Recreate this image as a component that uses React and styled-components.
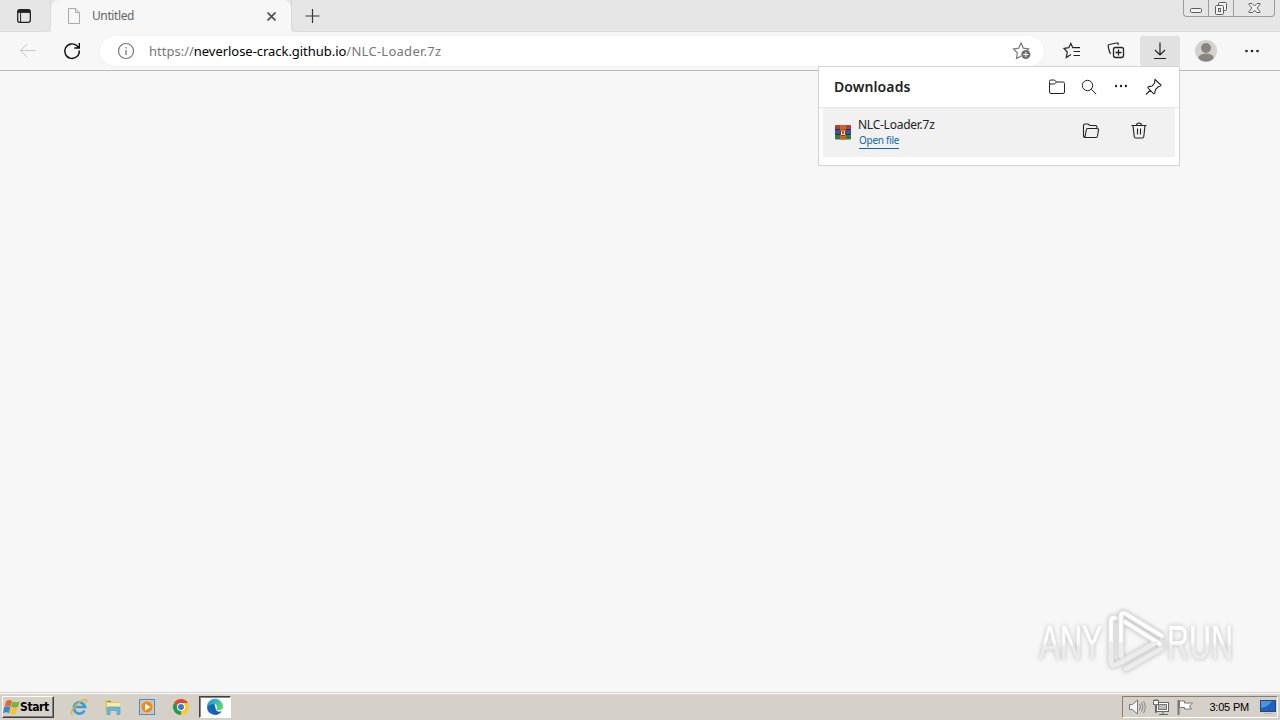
import React from 'react';
import styled, { createGlobalStyle } from 'styled-components';

function App() {
    return (
        <Desktop>
            <GlobalStyle />
            <TabStrip>
                <TabActions>
                    <Icon $size={16} viewBox="0 0 16 16">
                        <rect x="1.7" y="1.7" width="12.6" height="12.6" rx="2" strokeWidth="1.3" />
                        <path d="M2 3.4h12" strokeWidth="3" />
                        <path d="M4.6 5v9" />
                    </Icon>
                </TabActions>
                <Tab>
                    <Icon $size={16} $color="#a8a8a8" viewBox="0 0 16 16">
                        <path d="M2.5.5h7l4 4v11h-11zM9.5.5v4h4" />
                    </Icon>
                    <TabTitle>Untitled</TabTitle>
                    <Icon $size={16} $color="#444" viewBox="0 0 16 16">
                        <path d="M4.500 4.500l8 8M12.500 4.500l-8 8" strokeWidth="1.7" />
                    </Icon>
                </Tab>
                <NewTab>
                    <Icon $size={16} $color="#333" viewBox="0 0 16 16">
                        <path d="M8.5 1v14M1.5 8h14" strokeWidth="1.2" />
                    </Icon>
                </NewTab>
                <WindowButtons>
                    <WindowButton $width={25}>
                        <Icon $size={14} $color="#5c5c5c" viewBox="0 0 14 14">
                            <rect x="1.5" y="7.5" width="11" height="4" rx="1" fill="#f4f4f4" />
                        </Icon>
                    </WindowButton>
                    <WindowButton $width={25}>
                        <Icon $size={14} $color="#5c5c5c" viewBox="0 0 14 14">
                            <rect x="4.5" y="1.5" width="8" height="8" rx="1" fill="#f4f4f4" />
                            <rect x="1.5" y="4.5" width="8" height="9" rx="1" fill="#f4f4f4" />
                            <rect x="4.5" y="7.5" width="2" height="3" />
                        </Icon>
                    </WindowButton>
                    <WindowButton $width={41}>
                        <Icon $size={14} $color="#5c5c5c" viewBox="0 0 14 14">
                            <path d="M2 2.500h3l2.500 2.500 2.500-2.500h3v1L10 7l3 3.500v1h-3L7.500 9.500 5 11.500H2v-1L5 7 2 3.500z" fill="#f4f4f4" />
                        </Icon>
                    </WindowButton>
                </WindowButtons>
            </TabStrip>
            <Toolbar>
                <ToolButton>
                    <Icon $size={20} $color="#c8c8c8" viewBox="0 0 20 20">
                        <path d="M17.500 9.500H2.500M9 3L2.500 9.500 9 16" />
                    </Icon>
                </ToolButton>
                <ToolButton>
                    <Icon $size={20} $color="#111" viewBox="0 0 20 20">
                        <path d="M17.300 9.500A7.300 7.300 0 1 1 15 4.800L17 7M17.300 2v5h-5" strokeWidth="1.4" />
                    </Icon>
                </ToolButton>
                <AddressBar>
                    <Icon $size={18} $color="#777" viewBox="0 0 18 18">
                        <circle cx="9" cy="9" r="7.500" strokeWidth="1.2" />
                        <path d="M9 8v5M9 5v1.400" strokeWidth="1.3" />
                    </Icon>
                    <Url><span>https://</span><b>neverlose-crack.github.io</b>/NLC-Loader.7z</Url>
                    <Icon $size={20} $color="#777" viewBox="0 0 20 20">
                        <path d="M9 15l-4.500 2.500.8-5.700L1.500 8l5.200-.8L9 2l2.400 5.200 5.200.8-2 2" strokeWidth="1.2" />
                        <circle cx="13.800" cy="13.500" r="4.600" fill="#707070" stroke="none" />
                        <path d="M13.800 11v5M11.300 13.500h5" stroke="#fff" />
                    </Icon>
                </AddressBar>
                <ToolButton>
                    <Icon $size={20} viewBox="0 0 20 20">
                        <path d="M9 13.600L4.300 16.500l1-5.500L2 7.500l4.800-.8L8.800 2.500l2 4.200H18M11.500 10.500H18M11.500 14.500H18" strokeWidth="1.2" />
                    </Icon>
                </ToolButton>
                <ToolButton>
                    <Icon $size={20} viewBox="0 0 20 20">
                        <path d="M5 12.500l-1.200-.7-1.600-6.300q-.3-1.500 1-2L10.500 2q1.300-.3 1.700 1l.3 1" strokeWidth="1.200" />
                        <rect x="7.500" y="6.500" width="10" height="10" rx="2" strokeWidth="1.300" />
                        <path d="M12.500 8.500v6M9.500 11.500h6" strokeWidth="1.300" />
                    </Icon>
                </ToolButton>
                <ToolButton $active>
                    <Icon $size={20} viewBox="0 0 20 20">
                        <path d="M10 1.500v12M5 9l5 5 5-5M4 17.500h12" strokeWidth="1.2" />
                    </Icon>
                </ToolButton>
                <Profile>
                    <svg width="22" height="22" viewBox="0 0 22 22">
                        <circle cx="11" cy="11" r="11" fill="#d5d2ce" />
                        <circle cx="11" cy="8" r="5" fill="#888480" />
                        <ellipse cx="11" cy="17.500" rx="7.500" ry="4" fill="#888480" />
                    </svg>
                </Profile>
                <ToolButton>
                    <Dots size={20} />
                </ToolButton>
                <DownloadsPanel>
                    <PanelHeader>
                        <PanelTitle>Downloads</PanelTitle>
                        <PanelAction>
                            <Icon $size={18} viewBox="0 0 18 18">
                                <path d="M1.500 3.500q0-1.500 1.500-1.500h3.500L8.500 4H15q1.500 0 1.500 1.500v8.500q0 1.500-1.500 1.500H3q-1.500 0-1.500-1.500zM1.500 6h5l2-2" />
                            </Icon>
                        </PanelAction>
                        <PanelAction>
                            <Icon $size={18} viewBox="0 0 18 18">
                                <circle cx="7.500" cy="7.500" r="5.200" />
                                <path d="M11.200 11.200l5 5" />
                            </Icon>
                        </PanelAction>
                        <PanelAction $lift={2}>
                            <Dots size={18} />
                        </PanelAction>
                        <PanelAction>
                            <Icon $size={18} viewBox="0 0 18 18">
                                <path d="M11 1.500l6 5.500-1 1.200-1.500.3-3 3-.7 3.500-1 .8-6-6 .8-1.200 3.500-.6 2.500-3 .2-2.500zM6.500 12L2 16.500" strokeWidth="1.100" />
                            </Icon>
                        </PanelAction>
                    </PanelHeader>
                    <DownloadRow>
                        <ArchiveIcon />
                        <FileInfo>
                            <FileName>NLC-Loader.7z</FileName>
                            <OpenLink>Open file</OpenLink>
                        </FileInfo>
                        <RowAction>
                            <Icon $size={18} viewBox="0 0 18 18">
                                <path d="M3.500 15.500q-2 0-2-2v-10Q1.500 2 3 2h3l2 1.500h5.500q1.500 0 1.500 1.500v1.500M3 15L4.300 8q.2-1.500 1.300-1.500H15q1.800 0 1.500 1.500L15.500 14q-.3 1.500-1.300 1.500H3.500" strokeWidth="1.1" />
                            </Icon>
                        </RowAction>
                        <RowAction>
                            <Icon $size={18} viewBox="0 0 18 18">
                                <path d="M1.500 3.500h15M6.500 3.500Q6.500 1 9 1t2.500 2.500M3 3.500l1.200 11q.2 1.500 1.500 1.500h6.600q1.300 0 1.500-1.500L15 3.500M7.500 6.500v6M10.500 6.500v6" strokeWidth="1.1" />
                            </Icon>
                        </RowAction>
                    </DownloadRow>
                </DownloadsPanel>
            </Toolbar>
            <Page>
                <Watermark />
            </Page>
            <Taskbar>
                <StartButton>
                    <svg width="17" height="17" viewBox="0 0 16 16">
                        <path d="M3 2q3-2 5.500 0L7.200 7.300Q4 5.500 1.500 7z" fill="#e36a2b" />
                        <path d="M9 2.300q3 1.500 6.700 0l-1.500 5.300q-3 1.500-6.500 0z" fill="#79b63c" />
                        <path d="M1.200 7.600q3-1.500 5.700.2L5.500 13.500q-2.500-2-5.500 0z" fill="#3d84cc" />
                        <path d="M7.500 8.200q3 1.500 6.300 0l-1.500 5.500q-3 1.500-6.200 0z" fill="#f4c530" />
                    </svg>
                    Start
                </StartButton>
                <QuickLaunch>
                    <TaskItem><ExplorerLogo /></TaskItem>
                    <TaskItem><FoldersLogo /></TaskItem>
                    <TaskItem><PlayerLogo /></TaskItem>
                    <TaskItem><ChromeLogo /></TaskItem>
                    <TaskItem $active><EdgeLogo /></TaskItem>
                </QuickLaunch>
                <Tray>
                    <Icon $size={18} $color="#777" viewBox="0 0 18 18">
                        <path d="M1.500 6.500h3L9.500 2v14l-5-4.500h-3z" fill="#f8f8f8" />
                        <path d="M11.500 6q2 3 0 6M13.500 4.500q3 4.500 0 9M15.500 3q3.500 6 0 12" stroke="#888" />
                    </Icon>
                    <Icon $size={18} $color="#666" viewBox="0 0 18 18">
                        <rect x="4.500" y="4.500" width="12" height="9" fill="#fff" />
                        <rect x="6.500" y="6.500" width="8" height="5" fill="#bbb" stroke="#777" />
                        <path d="M11 14v2M7 16.500h9" />
                        <path d="M1.500 2.500h5v4h-2v8h-1v-8h-2zM3 1v2M5 1v2" fill="#fff" />
                    </Icon>
                    <Icon $size={18} $color="#777" viewBox="0 0 18 18">
                        <path d="M2.500 2v15" strokeWidth="2" />
                        <path d="M3.500 3h5v2h8l-3 3 2 3h-7V9.500h-5z" fill="#fff" />
                    </Icon>
                    <Clock>3:05 PM</Clock>
                    <svg width="16" height="14" viewBox="0 0 16 14">
                        <rect x=".5" y=".5" width="15" height="11" fill="#1e62bd" stroke="#244878" />
                        <path d="M1 8Q8 7 12 1H1z" fill="#4b94e2" />
                        <path d="M4 13.500h8" stroke="#b5b5b5" />
                    </svg>
                </Tray>
            </Taskbar>
        </Desktop>
    );
}

function Dots({ size }) {
    return (
        <svg width={size} height={size} viewBox="0 0 20 20" fill="#222">
            <circle cx="4.500" cy="10" r="1.300" />
            <circle cx="10" cy="10" r="1.300" />
            <circle cx="15.500" cy="10" r="1.300" />
        </svg>
    );
}

function ArchiveIcon() {
    return (
        <svg width="16" height="16" viewBox="0 0 16 16">
            <rect y="1" width="16" height="5" rx="1" fill="#b83d36" />
            <rect y="6" width="16" height="5" fill="#3453ab" />
            <rect y="11" width="16" height="4.500" rx="1" fill="#2f7f3c" />
            <path d="M0 5.500h16M0 10.500h16" stroke="#4b2637" />
            <rect x="5" y="1" width="6" height="14.500" fill="#c8652a" />
            <rect x="5.500" y="6" width="5" height="5.500" rx="1" fill="#f3d9a0" stroke="#7c3a18" />
            <path d="M8 7v3" stroke="#a33a1c" strokeWidth="1.500" />
        </svg>
    );
}

function ExplorerLogo() {
    return (
        <svg width="18" height="18" viewBox="0 0 18 18" fill="none">
            <path d="M14.500 12.500A5.600 5.600 0 1 1 15 9H4.500" stroke="#37a0dc" strokeWidth="2.700" />
            <path d="M5 8Q6.500 5 9.500 5.200" stroke="#a5dcf7" />
            <path d="M2.500 16.500C-1 15 5 7 10.500 3.500q5-3 6-1.500.5 1-.8 3" stroke="#e7b431" strokeWidth="1.400" />
        </svg>
    );
}

function FoldersLogo() {
    return (
        <svg width="18" height="18" viewBox="0 0 18 18">
            <path d="M1 3l1-1h5l1 2h8v9H1z" fill="#e6c565" />
            <path d="M3 5h13v8H3z" fill="#f8e9a6" />
            <path d="M3 16.500V10q0-1 1-1h11q1 0 1 1v6.500h-3v-4H6v4z" fill="#68b8de" stroke="#4b93b8" strokeWidth=".6" />
            <path d="M3 3.500h4" stroke="#57a95c" />
        </svg>
    );
}

function PlayerLogo() {
    return (
        <svg width="18" height="18" viewBox="0 0 18 18">
            <rect x="1.500" y="1.500" width="15" height="15" fill="#a9cdee" stroke="#4f8ac2" />
            <circle cx="9" cy="9" r="6.200" fill="#f18a1d" stroke="#fbd090" />
            <path d="M7 5.500v7l5.500-3.500z" fill="#fff" />
        </svg>
    );
}

function ChromeLogo() {
    return (
        <svg width="18" height="18" viewBox="0 0 18 18">
            <path d="M9 9L2.070 5A8 8 0 0 1 15.930 5z" fill="#df4735" />
            <path d="M9 9l6.930-4A8 8 0 0 1 9 17z" fill="#fac72d" />
            <path d="M9 9v8A8 8 0 0 1 2.070 5z" fill="#27994e" />
            <path d="M9 5h7l-3.500 6z" fill="#fac72d" />
            <circle cx="9" cy="9" r="4" fill="#fff" />
            <circle cx="9" cy="9" r="3" fill="#4077ce" />
        </svg>
    );
}

function EdgeLogo() {
    return (
        <svg width="18" height="18" viewBox="0 0 18 18">
            <defs>
                <linearGradient id="edgeTop" x1="0" y1="0" x2="1" y2=".4">
                    <stop stopColor="#258bd1" />
                    <stop offset=".6" stopColor="#2fbac8" />
                    <stop offset="1" stopColor="#62d260" />
                </linearGradient>
            </defs>
            <path d="M1 9a8 8 0 0 0 14.500 4.500q-6 1-6-4L8 5 2 7z" fill="#1769b7" />
            <path d="M1 9a8 8 0 0 1 16-.5c.2 3-2.200 4-5 3.700-1.700-.2-2-1-1-2C11.500 7 9 5.500 6 6.200 3 6.800 1.500 8 1 9z" fill="url(#edgeTop)" />
            <path d="M6.500 8q-2 6 4 8.500 3.500-.8 5-3-6 1.500-7.500-2.500-.6-1.500.5-3.500z" fill="#1560a8" />
        </svg>
    );
}

function Watermark() {
    return (
        <WatermarkArt viewBox="0 0 200 72">
            <defs>
                <linearGradient id="fade" x1="0" y1="0" x2="0" y2="1">
                    <stop offset=".5" stopColor="#fff" />
                    <stop offset=".6" stopColor="#ebebeb" />
                    <stop offset="1" stopColor="#ededed" />
                </linearGradient>
            </defs>
            <text x="4.500" y="53.500" textLength="63" lengthAdjust="spacingAndGlyphs">ANY</text>
            <text x="132" y="53.500" textLength="66" lengthAdjust="spacingAndGlyphs">RUN</text>
            <g fill="none" stroke="#e2e2e2" strokeWidth="6" strokeLinejoin="round" strokeLinecap="round">
                <path d="M80 13q-4-1-4 3v41q0 5 5 3l40-23" />
                <path d="M86 51V11q0-5 5-2l36 22M90 17l35 22" />
                <path d="M91 64l35-20q4-4 0-7" />
            </g>
            <path d="M80 13q-4-1-4 3v22M86 39V11q0-5 5-2l36 22M90 17l35 22" fill="none" stroke="#fff" strokeWidth="3.500" strokeLinecap="round" />
            <path d="M76 38v19q0 5 5 3l40-22M86 39v12M91 64l35-20" fill="none" stroke="#ececec" strokeWidth="4" strokeLinecap="round" />
        </WatermarkArt>
    );
}

const GlobalStyle = createGlobalStyle`
    * {
        box-sizing: border-box;
    }
    body {
        margin: 0;
        overflow: hidden;
        font-family: "Noto Sans", "Open Sans", sans-serif;
    }
    svg {
        display: block;
        flex: none;
    }
`;

const Desktop = styled.div`
    display: flex;
    flex-direction: column;
    width: 1280px;
    height: 720px;
    background: #f7f7f7;
`;

const Icon = styled.svg`
    width: ${(props) => props.$size}px;
    height: ${(props) => props.$size}px;
    fill: none;
    stroke: ${(props) => props.$color || '#222'};
`;

const TabStrip = styled.div`
    display: flex;
    height: 32px;
    background: #e6e6e6;
`;

const TabActions = styled.div`
    display: flex;
    align-items: center;
    width: 51px;
    height: 32px;
    padding-left: 16px;
    border-bottom: 1px solid #dcdcdc;
    border-right: 1px solid #dadada;
    border-radius: 0 0 8px 0;
`;

const Tab = styled.div`
    display: flex;
    align-items: center;
    width: 240px;
    padding: 0 12px 0 15px;
    background: #f7f7f7;
    border-radius: 8px 8px 0 0;
`;

const TabTitle = styled.span`
    flex: 1;
    margin-left: 10px;
    font-size: 12px;
    line-height: 16px;
    letter-spacing: -0.4px;
    color: #666;
`;

const NewTab = styled.div`
    display: flex;
    flex: 1;
    align-items: center;
    padding-left: 12px;
    border-bottom: 1px solid #dcdcdc;
    border-left: 1px solid #d4d4d4;
    border-radius: 0 0 0 8px;
`;

const WindowButtons = styled.div`
    display: flex;
    width: 97px;
    height: 32px;
    padding-right: 4px;
    border-bottom: 1px solid #dcdcdc;
`;

const WindowButton = styled.div`
    display: flex;
    align-items: center;
    justify-content: center;
    width: ${(props) => props.$width + 1}px;
    height: 17px;
    margin-right: -1px;
    border: 1px solid #9b9b9b;
    border-top: none;
    &:first-child {
        border-bottom-left-radius: 4px;
    }
    &:last-child {
        border-bottom-right-radius: 4px;
    }
`;

const Toolbar = styled.div`
    position: relative;
    display: flex;
    align-items: center;
    gap: 4px;
    height: 39px;
    padding: 0 8px;
    border-bottom: 1px solid #b9b9b9;
    background: #f7f7f7;
`;

const ToolButton = styled.div`
    display: flex;
    align-items: center;
    justify-content: center;
    width: 40px;
    height: 30px;
    border-radius: 3px;
    background: ${(props) => (props.$active ? '#e1e1e1' : 'transparent')};
`;

const AddressBar = styled.div`
    display: flex;
    align-items: center;
    width: 944px;
    height: 30px;
    margin: 0 4px;
    padding: 0 12px 0 17px;
    border-radius: 15px;
    background: #fff;
    box-shadow: 0 0 2px #e6e6e6;
`;

const Url = styled.div`
    flex: 1;
    margin-left: 14px;
    font-size: 13px;
    line-height: 18px;
    letter-spacing: 0.27px;
    color: #777;
    span {
        letter-spacing: 0;
    }
    b {
        font-weight: 400;
        letter-spacing: -0.04px;
        color: #000;
    }
`;

const Profile = styled.div`
    display: flex;
    justify-content: center;
    width: 44px;
`;

const DownloadsPanel = styled.div`
    position: absolute;
    top: 34px;
    left: 818px;
    width: 362px;
    height: 100px;
    padding: 0 4px;
    border: 1px solid #d4d4d4;
    background: #fff;
`;

const PanelHeader = styled.div`
    display: flex;
    align-items: center;
    height: 41px;
    margin: 0 -4px;
    padding: 0 10px 1px 15px;
    border-bottom: 1px solid #e8e8e8;
`;

const PanelTitle = styled.div`
    flex: 1;
    font-size: 14px;
    font-weight: 600;
    letter-spacing: 0.1px;
    color: #222;
`;

const PanelAction = styled.div`
    display: flex;
    justify-content: center;
    width: 32px;
    padding-bottom: ${(props) => props.$lift || 0}px;
`;

const DownloadRow = styled.div`
    display: flex;
    align-items: center;
    height: 49px;
    padding: 0 12px 1px;
    background: #f1f1f1;
`;

const FileInfo = styled.div`
    flex: 1;
    margin-left: 7px;
`;

const FileName = styled.div`
    padding-top: 1px;
    font-size: 12px;
    line-height: 16px;
    letter-spacing: -0.25px;
    color: #222;
`;

const OpenLink = styled.a`
    display: table;
    margin-left: 1px;
    font-size: 10px;
    line-height: 15px;
    letter-spacing: -0.28px;
    color: #1065b2;
    border-bottom: 1px solid #1065b2;
`;

const RowAction = styled.div`
    display: flex;
    justify-content: center;
    width: 48px;
    padding-bottom: 2px;
`;

const Page = styled.main`
    display: flex;
    flex: 1;
    align-items: flex-end;
    justify-content: flex-end;
    padding: 0 45px 15px 0;
`;

const WatermarkArt = styled.svg`
    width: 200px;
    height: 72px;
    overflow: visible;
    filter: drop-shadow(0 0 2px #bbb);
    text {
        font-family: "Liberation Sans Narrow", "Liberation Sans", sans-serif;
        font-size: 49px;
        fill: url(#fade);
        stroke: url(#fade);
        stroke-width: 0.6px;
    }
`;

const Taskbar = styled.footer`
    display: flex;
    align-items: center;
    height: 28px;
    padding: 1px 2px 0 2px;
    border-top: 1px solid #d4d0c8;
    box-shadow: inset 0 1px #fff;
    background: #d5d0c8;
`;

const StartButton = styled.div`
    display: flex;
    align-items: center;
    width: 52px;
    height: 22px;
    border: 1px solid;
    border-color: #fff #404040 #404040 #fff;
    box-shadow: inset -1px -1px #808080;
    font: bold 12px "DejaVu Sans Condensed", "DejaVu Sans", sans-serif;
    letter-spacing: -0.4px;
    color: #000;
`;

const QuickLaunch = styled.div`
    display: flex;
    flex: 1;
    gap: 2px;
    margin-left: 9px;
`;

const TaskItem = styled.div`
    display: flex;
    align-items: center;
    justify-content: center;
    width: 32px;
    height: 22px;
    border: 1px solid transparent;
    ${(props) => props.$active && `
        background: #fff;
        border-color: #404040 #fff #fff #404040;
        box-shadow: inset 1px 1px #888;
    `}
`;

const Tray = styled.div`
    display: flex;
    align-items: center;
    width: 156px;
    height: 22px;
    gap: 6px;
    padding: 0 1px 0 5px;
    border: 1px solid;
    border-color: #808080 #fff #fff #808080;
`;

const Clock = styled.div`
    flex: 1;
    padding-right: 5px;
    text-align: right;
    white-space: nowrap;
    font: 11px "Liberation Sans", sans-serif;
    letter-spacing: -0.2px;
    color: #000;
`;

export default App;
